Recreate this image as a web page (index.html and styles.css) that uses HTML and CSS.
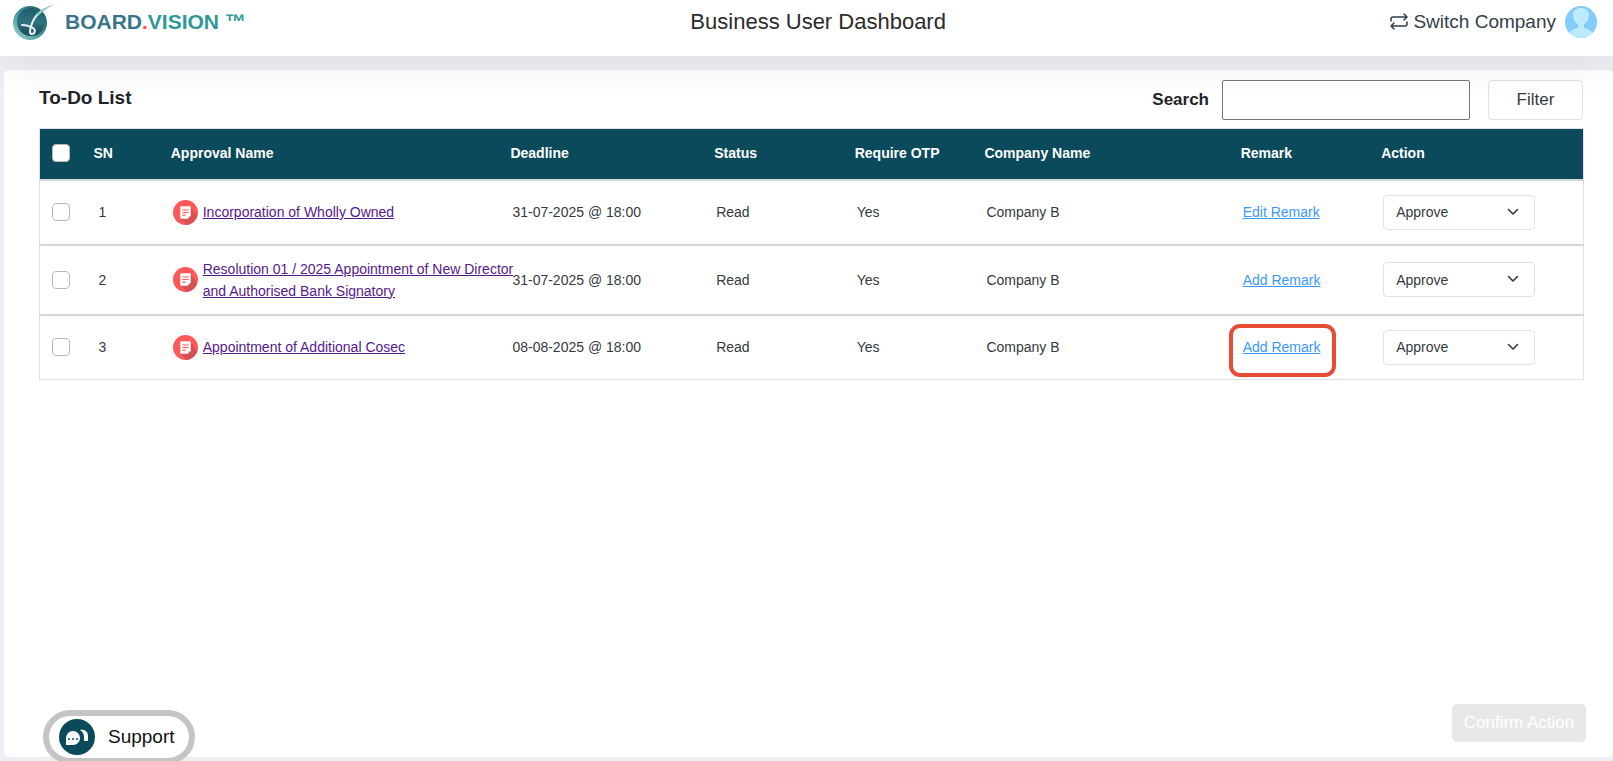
FILE: index.html
```
<!DOCTYPE html>
<html lang="en">
<head>
  <meta charset="UTF-8">
  <meta name="viewport" content="width=device-width, initial-scale=1.0">
  <title>Business User Dashboard</title>
  <link rel="stylesheet" href="styles.css">
</head>
<body>
  <svg class="sprite" aria-hidden="true">
    <symbol id="doc" viewBox="0 0 24 24">
      <circle cx="12" cy="12" r="12" fill="#ff5858"/>
      <path d="M17 7l6 8a12 12 0 0 1-10 9L8 18z" fill="#d65054"/>
      <path d="M8 6h8a1 1 0 0 1 1 1v8l-3 3H8a1 1 0 0 1-1-1V7a1 1 0 0 1 1-1z" fill="#fff"/>
      <path d="M14 18v-2a1 1 0 0 1 1-1h2z" fill="#d5d8dc"/>
      <path d="M9 9.500h6M9 12h6M9 14.500h3" stroke="#ff5858" stroke-width="1"/>
    </symbol>
    <symbol id="chevron" viewBox="0 0 12 12">
      <path d="M1.500 3.500L6 8l4.500-4.500" fill="none" stroke="#343a40" stroke-width="1.600" stroke-linecap="round" stroke-linejoin="round"/>
    </symbol>
  </svg>

  <header class="topbar">
    <a class="brand" href="#">
      <svg class="brand-logo" width="44" height="38" viewBox="0 0 44 38" aria-hidden="true">
        <defs>
          <linearGradient id="rim" x1="1" y1="0" x2="0" y2="1">
            <stop offset="0" stop-color="#1c5563"/>
            <stop offset="0.500" stop-color="#3f8f94"/>
            <stop offset="1" stop-color="#a5dcd3"/>
          </linearGradient>
          <linearGradient id="ball" x1="0" y1="0" x2="0" y2="1">
            <stop offset="0" stop-color="#1f5d6b"/>
            <stop offset="0.500" stop-color="#2f7482"/>
            <stop offset="1" stop-color="#1c4556"/>
          </linearGradient>
        </defs>
        <circle cx="18" cy="20" r="17" fill="url(#rim)"/>
        <circle cx="19" cy="19" r="14" fill="url(#ball)"/>
        <path d="M26 11c-4 4-6 8-7 13-1 3-2 7 1 7s4-4 1-6c-3-1-4-3-11-3" fill="none" stroke="#e9f3f3" stroke-width="2" stroke-linecap="round"/>
        <path d="M43 1c-7 2-14 5-19 10l2 2c4-4 9-8 17-12z" fill="#8cc7c4"/>
      </svg>
      <span class="brand-name"><span class="board">BOARD</span><span class="dot">.</span>VISION ™</span>
    </a>
    <h1>Business User Dashboard</h1>
    <div class="account">
      <a class="switch" href="#">
        <svg width="18" height="20" viewBox="0 0 18 20" fill="none" stroke="#343f48" stroke-width="1.500" stroke-linecap="round" stroke-linejoin="round" aria-hidden="true">
          <path d="M1 9V7a2 2 0 0 1 2-2h14M14 2l3 3-3 3M17 10v2a2 2 0 0 1-2 2H1M4 11l-3 3 3 3"/>
        </svg>
        Switch Company
      </a>
      <svg width="32" height="32" viewBox="0 0 32 32" role="img" aria-label="Profile">
        <clipPath id="round"><circle cx="16" cy="16" r="16"/></clipPath>
        <g clip-path="url(#round)">
          <rect width="32" height="32" fill="#83ccfb"/>
          <path d="M3 32c0-6 4-9 10-10v-4C9 16 8 12 8 9c0-5 4-7 8-7s8 2 8 7c0 3-1 7-5 9v4c6 1 10 4 10 10z" fill="#bdeafd"/>
        </g>
      </svg>
    </div>
  </header>

  <main class="card">
    <div class="toolbar">
      <h2>To-Do List</h2>
      <label for="search">Search</label>
      <input type="text" id="search">
      <button type="button" class="filter">Filter</button>
    </div>

    <table>
      <colgroup>
        <col class="col-check">
        <col class="col-sn">
        <col class="col-name">
        <col class="col-deadline">
        <col class="col-status">
        <col class="col-otp">
        <col class="col-company">
        <col class="col-remark">
        <col>
      </colgroup>
      <thead>
        <tr>
          <th class="check"><input type="checkbox" aria-label="Select all"></th>
          <th>SN</th>
          <th>Approval Name</th>
          <th>Deadline</th>
          <th>Status</th>
          <th>Require OTP</th>
          <th>Company Name</th>
          <th>Remark</th>
          <th>Action</th>
        </tr>
      </thead>
      <tbody>
        <tr>
          <td class="check"><input type="checkbox" aria-label="Select row 1"></td>
          <td class="sn">1</td>
          <td>
            <div class="approval">
              <svg class="doc" aria-hidden="true"><use href="#doc"/></svg>
              <a href="#">Incorporation of Wholly Owned</a>
            </div>
          </td>
          <td>31-07-2025 @ 18:00</td>
          <td>Read</td>
          <td>Yes</td>
          <td>Company B</td>
          <td><a class="remark" href="#">Edit Remark</a></td>
          <td>
            <div class="picker">
              <select aria-label="Action for row 1"><option>Approve</option><option>Reject</option></select>
              <svg class="chevron" aria-hidden="true"><use href="#chevron"/></svg>
            </div>
          </td>
        </tr>
        <tr>
          <td class="check"><input type="checkbox" aria-label="Select row 2"></td>
          <td class="sn">2</td>
          <td>
            <div class="approval">
              <svg class="doc" aria-hidden="true"><use href="#doc"/></svg>
              <a href="#">Resolution 01 / 2025 Appointment of New Director<br>and Authorised Bank Signatory</a>
            </div>
          </td>
          <td>31-07-2025 @ 18:00</td>
          <td>Read</td>
          <td>Yes</td>
          <td>Company B</td>
          <td><a class="remark" href="#">Add Remark</a></td>
          <td>
            <div class="picker">
              <select aria-label="Action for row 2"><option>Approve</option><option>Reject</option></select>
              <svg class="chevron" aria-hidden="true"><use href="#chevron"/></svg>
            </div>
          </td>
        </tr>
        <tr>
          <td class="check"><input type="checkbox" aria-label="Select row 3"></td>
          <td class="sn">3</td>
          <td>
            <div class="approval">
              <svg class="doc" aria-hidden="true"><use href="#doc"/></svg>
              <a href="#">Appointment of Additional Cosec</a>
            </div>
          </td>
          <td>08-08-2025 @ 18:00</td>
          <td>Read</td>
          <td>Yes</td>
          <td>Company B</td>
          <td><a class="remark highlight" href="#">Add Remark</a></td>
          <td>
            <div class="picker">
              <select aria-label="Action for row 3"><option>Approve</option><option>Reject</option></select>
              <svg class="chevron" aria-hidden="true"><use href="#chevron"/></svg>
            </div>
          </td>
        </tr>
      </tbody>
    </table>

    <button type="button" class="confirm" disabled>Confirm Action</button>
  </main>

  <button type="button" class="support">
    <svg width="36" height="36" viewBox="0 0 36 36" aria-hidden="true">
      <circle cx="18" cy="18" r="18" fill="#0b4a5b"/>
      <path d="M7 26v-7a7 7 0 1 1 7 7z" fill="#fff"/>
      <path d="M21 11c5-1 8 2 8 6v5h-4v-4c0-3-1-5-4-7z" fill="#fff"/>
      <g fill="#0b4a5b"><circle cx="10" cy="20" r="1"/><circle cx="14" cy="20" r="1"/><circle cx="18" cy="20" r="1"/></g>
    </svg>
    Support
  </button>
</body>
</html>
```

FILE: styles.css
```
* {
  box-sizing: border-box;
}

body {
  margin: 0;
  min-height: 100vh;
  display: flex;
  flex-direction: column;
  font-family: "Liberation Sans", Arial, sans-serif;
  font-size: 14px;
  color: #343a40;
  background-color: #eeeff4;
}

h1, h2 {
  margin: 0;
}

input, select, button {
  font-family: inherit;
}

.sprite {
  position: absolute;
  width: 0;
  height: 0;
}

/* Top bar */
.topbar {
  position: relative;
  z-index: 1;
  display: flex;
  justify-content: space-between;
  align-items: center;
  height: 56px;
  padding: 0 16px 12px 12px;
  background-color: #fff;
  box-shadow: 0 8px 40px rgba(0, 0, 0, 0.07);
}

.topbar h1 {
  font-size: 22px;
  font-weight: normal;
  color: #2b2b2b;
}

.brand {
  display: flex;
  align-items: center;
  gap: 9px;
  text-decoration: none;
}

.brand-name {
  font-size: 21px;
  font-weight: bold;
  color: #31989a;
}

.brand-name .board {
  color: #39758a;
}

.brand-name .dot {
  color: #ff4d4d;
}

.account {
  display: flex;
  align-items: center;
  gap: 9px;
}

.switch {
  display: flex;
  align-items: center;
  gap: 5px;
  font-size: 19px;
  color: #343f48;
  text-decoration: none;
}

/* Card */
.card {
  flex: 1;
  display: flex;
  flex-direction: column;
  margin: 14px 0 4px 4px;
  padding: 10px 29px 15px 35px;
  background-color: #fff;
  border-radius: 5px;
}

.toolbar {
  display: flex;
  align-items: center;
  height: 40px;
  margin-bottom: 8px;
}

.toolbar h2 {
  margin-right: auto;
  padding-bottom: 4px;
  font-size: 19px;
  color: #212529;
}

.toolbar label {
  font-size: 17px;
  font-weight: bold;
  color: #212529;
}

.toolbar input {
  width: 248px;
  height: 40px;
  margin: 0 18px 0 13px;
  padding: 0 8px;
  border: 1px solid #767676;
  border-radius: 2px;
  background-color: #fff;
  font-size: 16px;
}

.filter {
  width: 95px;
  height: 40px;
  margin-right: 1px;
  border: 1px solid #dee2e6;
  border-radius: 4px;
  background-color: #fff;
  color: #343a40;
  font-size: 17px;
}

/* Table */
table {
  width: 100%;
  table-layout: fixed;
  border-collapse: collapse;
  border: 1px solid #dee2e6;
  line-height: 22px;
}

.col-check { width: 3.5%; }
.col-sn { width: 5%; }
.col-name { width: 22%; }
.col-deadline { width: 13.2%; }
.col-status { width: 9.1%; }
.col-otp { width: 8.4%; }
.col-company { width: 16.6%; }
.col-remark { width: 9.1%; }

thead {
  background-color: #0b4a5b;
  color: #fff;
}

thead tr {
  height: 51px;
}

tbody tr {
  height: 65px;
  border-top: 2px solid #d3d7db;
}

th, td {
  padding: 0;
  text-align: left;
}

th {
  padding-bottom: 2px;
}

td {
  padding: 12px 0 12px 2px;
}

.check {
  padding-left: 12px;
}

.sn {
  padding-left: 5px;
}

input[type="checkbox"] {
  appearance: none;
  display: block;
  width: 18px;
  height: 18px;
  margin: 0;
  border: 1px solid #bfb8bb;
  border-radius: 4px;
  background-color: #fff;
}

input[type="checkbox"]:checked {
  background-color: #0b4a5b;
}

.approval {
  display: flex;
  align-items: center;
  gap: 5px;
  white-space: nowrap;
}

.approval a {
  color: #551a8b;
}

.doc {
  flex: none;
  width: 25px;
  height: 25px;
}

.remark {
  position: relative;
  color: #3b99fc;
}

/* Frame drawn round the remark link */
.highlight::after {
  content: "";
  position: absolute;
  inset: -15px -16px -22px -14px;
  border: 4px solid #e74c36;
  border-radius: 11px;
}

.picker {
  position: relative;
  width: 152px;
}

.picker select {
  appearance: none;
  display: block;
  width: 100%;
  height: 35px;
  padding: 0 12px;
  border: 1px solid #dee2e6;
  border-radius: 4px;
  background-color: #fff;
  color: #343a40;
  font-size: 14px;
}

.chevron {
  position: absolute;
  top: 11px;
  right: 16px;
  width: 12px;
  height: 12px;
  pointer-events: none;
}

/* Footer buttons */
.confirm {
  align-self: flex-end;
  width: 134px;
  height: 38px;
  margin-top: auto;
  margin-right: -2px;
  padding: 0;
  border: none;
  border-radius: 5px;
  background-color: #e8e8e8;
  color: #fff;
  font-size: 17px;
}

.support {
  position: fixed;
  bottom: -3px;
  left: 43px;
  display: flex;
  align-items: center;
  gap: 13px;
  height: 54px;
  padding: 0 14px 0 10px;
  border: 6px solid #c4c4c4;
  border-radius: 27px;
  background-color: #fff;
  color: #111;
  font-size: 19px;
}
```
